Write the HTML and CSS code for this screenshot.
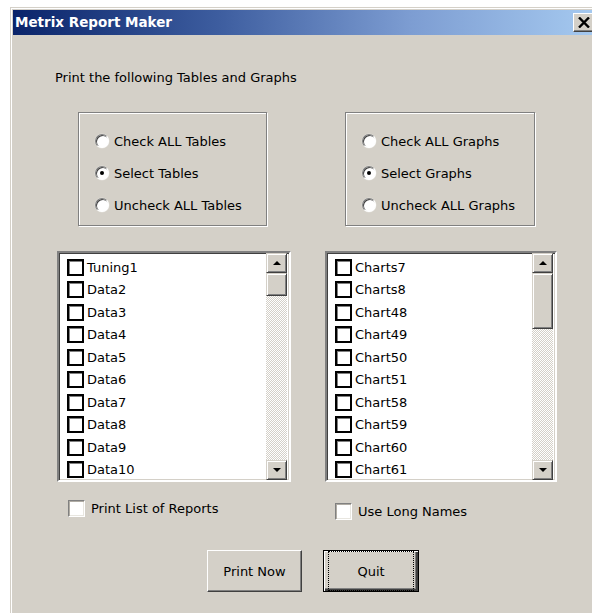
FILE: index.html
```html
<!DOCTYPE html>
<html lang="en">
<head>
<meta charset="utf-8">
<title>Metrix Report Maker</title>
<link rel="stylesheet" href="styles.css">
</head>
<body>
<div class="window">
  <div class="titlebar">
    <span class="title">Metrix Report Maker</span>
    <button class="close" type="button" aria-label="Close">
      <svg width="12" height="11" viewBox="0 0 12 11"><path d="M1 0.5 L11 10.5 M11 0.5 L1 10.5" stroke="#000" stroke-width="2.4"/></svg>
    </button>
  </div>
  <div class="client">
    <div class="caption">Print the following Tables and Graphs</div>
    <div class="columns">
      <div class="col">
        <div class="group group-left">
          <label class="radio"><span class="dot"></span>Check ALL Tables</label>
          <label class="radio"><span class="dot on"></span>Select Tables</label>
          <label class="radio"><span class="dot"></span>Uncheck ALL Tables</label>
        </div>
        <div class="list">
          <div class="items">
            <div class="item"><span class="box"></span>Tuning1</div>
            <div class="item"><span class="box"></span>Data2</div>
            <div class="item"><span class="box"></span>Data3</div>
            <div class="item"><span class="box"></span>Data4</div>
            <div class="item"><span class="box"></span>Data5</div>
            <div class="item"><span class="box"></span>Data6</div>
            <div class="item"><span class="box"></span>Data7</div>
            <div class="item"><span class="box"></span>Data8</div>
            <div class="item"><span class="box"></span>Data9</div>
            <div class="item"><span class="box"></span>Data10</div>
          </div>
          <div class="scrollbar">
            <div class="sbtn"><span class="tri up"></span></div>
            <div class="track"><div class="thumb thumb-small"></div></div>
            <div class="sbtn"><span class="tri down"></span></div>
          </div>
        </div>
        <label class="option option-left"><span class="check"></span>Print List of Reports</label>
      </div>
      <div class="col">
        <div class="group group-right">
          <label class="radio"><span class="dot"></span>Check ALL Graphs</label>
          <label class="radio"><span class="dot on"></span>Select Graphs</label>
          <label class="radio"><span class="dot"></span>Uncheck ALL Graphs</label>
        </div>
        <div class="list">
          <div class="items">
            <div class="item"><span class="box"></span>Charts7</div>
            <div class="item"><span class="box"></span>Charts8</div>
            <div class="item"><span class="box"></span>Chart48</div>
            <div class="item"><span class="box"></span>Chart49</div>
            <div class="item"><span class="box"></span>Chart50</div>
            <div class="item"><span class="box"></span>Chart51</div>
            <div class="item"><span class="box"></span>Chart58</div>
            <div class="item"><span class="box"></span>Chart59</div>
            <div class="item"><span class="box"></span>Chart60</div>
            <div class="item"><span class="box"></span>Chart61</div>
          </div>
          <div class="scrollbar">
            <div class="sbtn"><span class="tri up"></span></div>
            <div class="track"><div class="thumb thumb-large"></div></div>
            <div class="sbtn"><span class="tri down"></span></div>
          </div>
        </div>
        <label class="option option-right"><span class="check"></span>Use Long Names</label>
      </div>
    </div>
    <div class="buttons">
      <button class="btn" type="button">Print Now</button>
      <button class="btn default" type="button"><span class="focus">Quit</span></button>
    </div>
  </div>
</div>
</body>
</html>
```

FILE: styles.css
```css
html, body {
  margin: 0;
  padding: 0;
  background: #fff;
  overflow: hidden;
  height: 613px;
}

body {
  font-family: "DejaVu Sans", sans-serif;
  font-size: 13px;
  color: #000;
}

/* dialog frame */
.window {
  margin: 7px 0 0 10px;
  width: 585px;
  height: 620px;
  padding: 2px;
  border-top: 1px solid #d4d0c8;
  border-left: 1px solid #d4d0c8;
  background: #d4d0c8;
  box-shadow: inset 1px 1px 0 #fff;
}

.titlebar {
  height: 25px;
  display: flex;
  align-items: flex-start;
  justify-content: space-between;
  background: linear-gradient(to right, #0a246a, #3d5d9f 35%, #7d9dd2 68%, #a6caf0);
}

.title {
  padding-left: 2px;
  line-height: 25px;
  font-weight: bold;
  font-size: 13.5px;
  color: #fff;
}

.close {
  width: 21px;
  height: 19px;
  margin: 3px 4px 0 0;
  padding: 0;
  display: flex;
  align-items: center;
  justify-content: center;
  background: #d4d0c8;
  border: 1px solid;
  border-color: #fff #404040 #404040 #fff;
  box-shadow: inset -1px -1px 0 #808080;
}

.client {
  padding: 35px 0 0 42px;
}

.caption {
  line-height: 16px;
}

.columns {
  display: grid;
  grid-template-columns: 234px 232px;
  column-gap: 34px;
  margin: 26px 0 0 2px;
  align-items: start;
}

.col {
  display: flex;
  flex-direction: column;
}

/* etched radio group frame */
.group {
  height: 114px;
  box-sizing: border-box;
  padding: 12px 0 0 16px;
  border: 1px solid #808080;
  box-shadow: inset 1px 1px 0 #fff, 1px 1px 0 #fff;
  display: flex;
  flex-direction: column;
}

.group-left {
  margin-left: 21px;
  width: 189px;
}

.group-right {
  margin-left: 20px;
  width: 190px;
}

.radio {
  height: 32px;
  display: flex;
  align-items: center;
  gap: 5px;
}

.dot {
  width: 14px;
  height: 14px;
  box-sizing: border-box;
  border-radius: 50%;
  background: #fff;
  border: 1px solid;
  border-color: #808080 #fff #fff #808080;
  box-shadow: inset 1px 1px 0 #404040, 0 0 0 0.5px #e4e2dc;
  display: flex;
  align-items: center;
  justify-content: center;
  flex: none;
}

.dot.on::after {
  content: "";
  width: 4px;
  height: 4px;
  border-radius: 50%;
  background: #000;
}

/* checklist box */
.list {
  margin-top: 25px;
  height: 231px;
  box-sizing: border-box;
  display: flex;
  background: #fff;
  border: 2px solid;
  border-color: #808080 #fff #fff #808080;
  box-shadow: inset 1px 1px 0 #404040, inset -1px -1px 0 #d4d0c8;
  padding: 0 2px 0 1px;
}

.items {
  flex: 1;
  padding: 3px 0 0 7px;
  overflow: hidden;
}

.item {
  height: 22.5px;
  display: flex;
  align-items: center;
  gap: 3px;
}

.box {
  width: 17px;
  height: 17px;
  box-sizing: border-box;
  border: 2px solid #000;
  box-shadow: inset 1px 1px 0 #808080;
  background: #fff;
  flex: none;
}

.scrollbar {
  width: 21px;
  display: flex;
  flex-direction: column;
}

.sbtn, .thumb {
  box-sizing: border-box;
  background: #d4d0c8;
  border: 1px solid;
  border-color: #d4d0c8 #404040 #404040 #d4d0c8;
  box-shadow: inset 1px 1px 0 #fff, inset -1px -1px 0 #808080;
}

.sbtn {
  height: 20px;
  display: flex;
  align-items: center;
  justify-content: center;
  flex: none;
}

.track {
  flex: 1;
  background: repeating-conic-gradient(#fff 0 25%, #d4d0c8 0 50%) 0 0 / 2px 2px;
}

.thumb-small {
  height: 23px;
}

.thumb-large {
  height: 56px;
}

.tri {
  width: 0;
  height: 0;
  border-left: 4px solid transparent;
  border-right: 4px solid transparent;
}

.tri.up {
  border-bottom: 4px solid #000;
}

.tri.down {
  border-top: 4px solid #000;
}

/* plain check options below the lists */
.option {
  display: flex;
  align-items: center;
  gap: 6px;
  height: 20px;
}

.option-left {
  margin: 16px 0 0 11px;
}

.option-right {
  margin: 19px 0 0 10px;
}

.check {
  width: 17px;
  height: 17px;
  box-sizing: border-box;
  background: #fff;
  border: 1px solid;
  border-color: #808080 #fff #fff #808080;
  box-shadow: inset 1px 1px 0 #b0aca4, inset -1px -1px 0 #e8e6e0;
  flex: none;
}

.buttons {
  display: flex;
  gap: 21px;
  margin: 29px 0 0 152px;
}

.btn {
  width: 95px;
  height: 42px;
  padding: 0;
  font: inherit;
  color: #000;
  background: #d4d0c8;
  border: 1px solid;
  border-color: #fff #404040 #404040 #fff;
  box-shadow: inset -1px -1px 0 #808080;
  display: flex;
  align-items: center;
  justify-content: center;
}

.btn.default {
  width: 96px;
  border: 1px solid #000;
  box-shadow: inset 1px 1px 0 #fff, inset -2px -2px 0 #404040, inset -3px -3px 0 #808080;
}

.focus {
  width: 100%;
  height: 100%;
  box-sizing: border-box;
  margin: 4px;
  border: 1px dotted #000;
  display: flex;
  align-items: center;
  justify-content: center;
}
```
